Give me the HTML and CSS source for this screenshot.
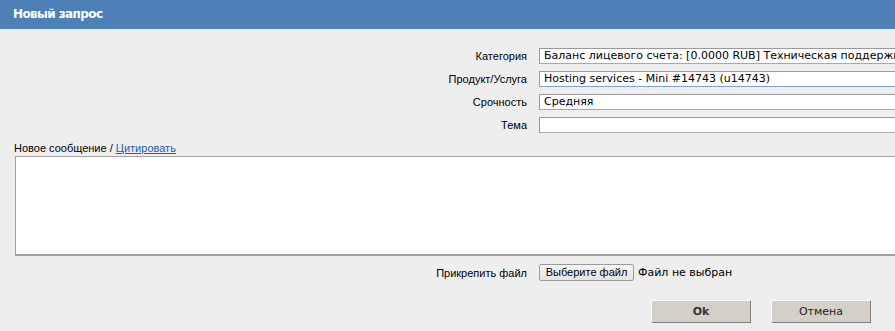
FILE: index.html
```html
<!DOCTYPE html>
<html lang="ru">
<head>
<meta charset="utf-8">
<title>Новый запрос</title>
<link rel="stylesheet" href="styles.css">
</head>
<body>
<div class="header">Новый запрос</div>
<form class="form">
  <div class="fields">
    <label class="lbl">Категория</label>
    <div class="input">Баланс лицевого счета: [0.0000 RUB] Техническая поддержка</div>
    <label class="lbl">Продукт/Услуга</label>
    <div class="input focus">Hosting services - Mini #14743 (u14743)</div>
    <label class="lbl">Срочность</label>
    <div class="input">Средняя</div>
    <label class="lbl">Тема</label>
    <div class="input"></div>
  </div>
  <div class="msg-label">Новое сообщение / <a href="#" class="link">Цитировать</a></div>
  <div class="textarea"></div>
  <div class="file-row">
    <label class="lbl">Прикрепить файл</label>
    <div class="file">
      <span class="file-btn">Выберите файл</span>
      <span class="file-text">Файл не выбран</span>
    </div>
  </div>
  <div class="actions">
    <span class="btn bold">Ok</span>
    <span class="btn">Отмена</span>
  </div>
</form>
</body>
</html>
```
FILE: styles.css
```css
html, body {
  margin: 0;
  padding: 0;
}
body {
  background: #eeeeee;
  width: 895px;
  height: 331px;
  overflow: hidden;
  font-family: "Liberation Sans", Arial, sans-serif;
  font-size: 11px;
  color: #000;
}
.header {
  height: 29px;
  background: #4c80b7;
  color: #fff;
  font-family: "DejaVu Sans", sans-serif;
  font-weight: bold;
  font-size: 12px;
  letter-spacing: -0.6px;
  line-height: 29px;
  padding-left: 13px;
}
.form {
  padding-top: 19px;
}
.fields, .file-row {
  display: grid;
  grid-template-columns: 527px 1000px;
  column-gap: 12px;
  row-gap: 7px;
  align-items: center;
}
.lbl {
  text-align: right;
  font-size: 11px;
  line-height: 16px;
}
.input {
  box-sizing: border-box;
  height: 16px;
  border: 1px solid #a9a9a9;
  border-top-color: #9a9a9a;
  border-left-color: #9a9a9a;
  background: #fff;
  font-family: "DejaVu Sans", sans-serif;
  font-size: 11px;
  line-height: 14px;
  padding-left: 4px;
  white-space: nowrap;
  overflow: hidden;
}
.input.focus {
  border-color: #7ea3d0;
}
.msg-label {
  margin-top: 7px;
  padding-left: 14px;
  line-height: 16px;
}
.link {
  color: #1d5ea8;
  text-decoration: underline;
}
.textarea {
  box-sizing: border-box;
  margin-left: 15px;
  width: 900px;
  height: 100px;
  background: #fff;
  border: 1px solid #a0a0a0;
  border-bottom-width: 2px;
}
.file-row {
  margin-top: 8px;
}
.file {
  display: flex;
  align-items: center;
  gap: 4px;
}
.file-btn {
  box-sizing: border-box;
  width: 95px;
  height: 17px;
  border: 1px solid #9a9a9a;
  border-radius: 2px;
  background: linear-gradient(#f6f6f6, #e4e4e4);
  font-size: 11px;
  line-height: 15px;
  text-align: center;
}
.file-text {
  font-family: "DejaVu Sans", sans-serif;
  font-size: 11px;
}
.actions {
  display: flex;
  gap: 20px;
  margin-top: 19px;
  padding-left: 651px;
}
.btn {
  box-sizing: border-box;
  width: 100px;
  height: 23px;
  background: #d4d0c8;
  border: 1px solid;
  border-color: #ffffff #808080 #808080 #ffffff;
  font-family: "DejaVu Sans", sans-serif;
  font-size: 11px;
  line-height: 21px;
  text-align: center;
  color: #222;
}
.btn.bold {
  font-weight: bold;
  color: #333;
}
```
